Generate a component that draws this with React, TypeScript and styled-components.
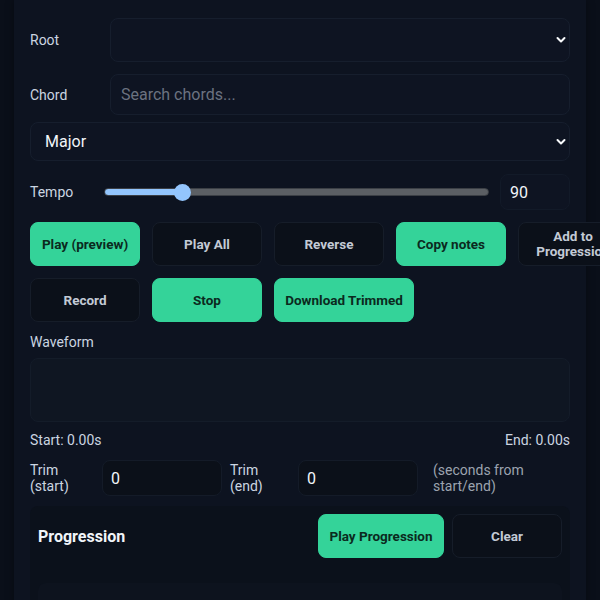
import React from "react";
import styled, { createGlobalStyle, css } from "styled-components";

const Global = createGlobalStyle`
  html, body {
    margin: 0;
    padding: 0;
    background: #0a0f19;
    font-family: Roboto, "Noto Sans", "Liberation Sans", sans-serif;
    color: #cbd5e1;
  }
  * { box-sizing: border-box; }
`;

const Page = styled.div`
  padding: 0 14px;
  min-height: 600px;
`;

const Panel = styled.main`
  background: #0d1320;
  padding: 18px 16px 0;
  min-height: 600px;
  display: flex;
  flex-direction: column;
  box-shadow: 0 0 8px rgba(0, 0, 0, 0.35);
`;

const FieldRow = styled.div<{ $mb: number }>`
  display: grid;
  grid-template-columns: 80px 1fr;
  align-items: center;
  margin-bottom: ${(p) => p.$mb}px;
`;

const Label = styled.label`
  font-size: 14px;
  color: #cbd5e1;
`;

const controlBase = css`
  width: 100%;
  background: #0e1422;
  border: 1px solid #161e2d;
  border-radius: 8px;
  color: #f1f5f9;
  font-family: inherit;
  font-size: 16px;
  outline: none;
`;

const SelectWrap = styled.div<{ $mb?: number }>`
  position: relative;
  width: 100%;
  margin-bottom: ${(p) => p.$mb ?? 0}px;
`;

const Select = styled.select<{ $h: number }>`
  ${controlBase};
  appearance: none;
  height: ${(p) => p.$h}px;
  padding: 0 14px;
`;

const Chevron = styled.svg`
  position: absolute;
  right: 4px;
  top: 50%;
  width: 10px;
  height: 8px;
  margin-top: -4px;
  pointer-events: none;
`;

const TextInput = styled.input<{ $h: number }>`
  ${controlBase};
  height: ${(p) => p.$h}px;
  padding: 0 10px;
  &::placeholder {
    color: #6b7280;
  }
`;

const TempoRow = styled.div`
  display: flex;
  align-items: center;
  margin-bottom: 12px;
`;

const TempoLabel = styled(Label)`
  width: 74px;
  flex: none;
`;

const Range = styled.input`
  flex: 1;
  margin: 0 11px 0 0;
  appearance: none;
  -webkit-appearance: none;
  height: 8px;
  border-radius: 4px;
  border: 1px solid #3b3f45;
  outline: none;
  &::-webkit-slider-thumb {
    -webkit-appearance: none;
    width: 17px;
    height: 17px;
    border-radius: 50%;
    background: #93c5fd;
    border: none;
  }
`;

const NumberInput = styled.input`
  ${controlBase};
  width: 70px;
  height: 36px;
  padding: 0 9px;
  flex: none;
  border-color: #121a28;
`;

const ButtonRow = styled.div`
  display: flex;
  gap: 12px;
  margin-bottom: 12px;
  margin-right: -40px;
`;

const Btn = styled.button<{ $primary?: boolean; $w?: number }>`
  flex: none;
  width: ${(p) => p.$w ?? 110}px;
  height: 44px;
  border-radius: 8px;
  font-family: inherit;
  font-size: 13.5px;
  font-weight: 700;
  line-height: 15px;
  padding: 0 4px;
  cursor: pointer;
  ${(p) =>
    p.$primary
      ? css`
          background: #34d399;
          border: 1px solid #34d399;
          color: #0b2a1e;
        `
      : css`
          background: #0b1019;
          border: 1px solid #161d29;
          color: #c3cad5;
        `}
`;

const SectionLabel = styled.div`
  font-size: 14px;
  color: #cbd5e1;
  margin: 0 0 8px;
`;

const Waveform = styled.div`
  height: 64px;
  background: #0f1622;
  border: 1px solid #141c29;
  border-radius: 8px;
`;

const TimeRow = styled.div`
  display: flex;
  justify-content: space-between;
  font-size: 14px;
  color: #cbd5e1;
  margin: 10px 0 12px;
`;

const TrimRow = styled.div`
  display: flex;
  align-items: center;
  gap: 8px;
  margin-bottom: 10px;
`;

const TrimLabel = styled.label<{ $w: number }>`
  width: ${(p) => p.$w}px;
  font-size: 14px;
  line-height: 16px;
  color: #cbd5e1;
  flex: none;
`;

const TrimInput = styled.input`
  ${controlBase};
  width: 120px;
  height: 36px;
  padding: 0 8px;
  flex: none;
  background: #0b1019;
  border-color: #141b28;
`;

const TrimNote = styled.span`
  margin-left: 7px;
  width: 110px;
  font-size: 14px;
  line-height: 16px;
  color: #9ca3af;
`;

const Card = styled.section`
  background: #0b111b;
  border-radius: 8px;
  padding: 8px;
`;

const CardHeader = styled.div`
  display: flex;
  align-items: center;
  gap: 8px;
`;

const CardTitle = styled.h2`
  flex: 1;
  margin: 0;
  font-size: 16px;
  font-weight: 700;
  color: #f1f5f9;
`;

const ChordList = styled.div`
  margin-top: 25px;
  height: 40px;
  background: #0d131e;
  border-radius: 8px;
`;

const Arrow = () => (
  <Chevron viewBox="0 0 10 8">
    <path d="M1.5 2 L5 5.5 L8.5 2" stroke="#f8fafc" strokeWidth="2" fill="none" strokeLinecap="round" strokeLinejoin="round" />
  </Chevron>
);

export default function App() {
  const min = 60;
  const max = 220;
  const tempo = 90;
  const pct = ((tempo - min) / (max - min)) * 100;

  return (
    <>
      <Global />
      <Page>
        <Panel>
          <FieldRow $mb={12}>
            <Label>Root</Label>
            <SelectWrap>
              <Select $h={44} defaultValue="">
                <option value=""></option>
              </Select>
              <Arrow />
            </SelectWrap>
          </FieldRow>
          <FieldRow $mb={7}>
            <Label>Chord</Label>
            <TextInput $h={41} placeholder="Search chords..." />
          </FieldRow>
          <SelectWrap $mb={13}>
            <Select $h={39} defaultValue="major">
              <option value="major">Major</option>
            </Select>
            <Arrow />
          </SelectWrap>
          <TempoRow>
            <TempoLabel>Tempo</TempoLabel>
            <Range
              type="range"
              min={min}
              max={max}
              defaultValue={tempo}
              style={{
                background: `linear-gradient(to right, #93c5fd 0%, #93c5fd ${pct}%, #5b5f64 ${pct}%, #5b5f64 100%)`,
              }}
            />
            <NumberInput defaultValue="90" />
          </TempoRow>
          <ButtonRow>
            <Btn $primary>Play (preview)</Btn>
            <Btn>Play All</Btn>
            <Btn>Reverse</Btn>
            <Btn $primary>Copy notes</Btn>
            <Btn>
              Add to
              <br />
              Progression
            </Btn>
          </ButtonRow>
          <ButtonRow>
            <Btn>Record</Btn>
            <Btn $primary>Stop</Btn>
            <Btn $primary $w={140}>
              Download Trimmed
            </Btn>
          </ButtonRow>
          <SectionLabel>Waveform</SectionLabel>
          <Waveform />
          <TimeRow>
            <span>Start: 0.00s</span>
            <span>End: 0.00s</span>
          </TimeRow>
          <TrimRow>
            <TrimLabel $w={64}>
              Trim
              <br />
              (start)
            </TrimLabel>
            <TrimInput defaultValue="0" />
            <TrimLabel $w={60}>
              Trim
              <br />
              (end)
            </TrimLabel>
            <TrimInput defaultValue="0" />
            <TrimNote>(seconds from start/end)</TrimNote>
          </TrimRow>
          <Card>
            <CardHeader>
              <CardTitle>Progression</CardTitle>
              <Btn $primary $w={126}>
                Play Progression
              </Btn>
              <Btn>Clear</Btn>
            </CardHeader>
            <ChordList />
          </Card>
        </Panel>
      </Page>
    </>
  );
}
